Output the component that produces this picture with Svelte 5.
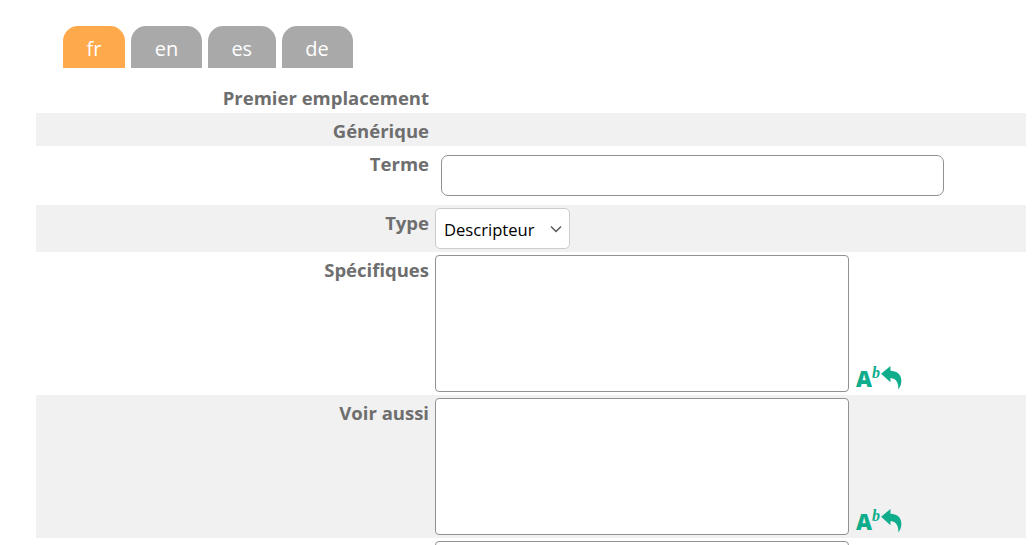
<script>
	const tabs = [
		{ code: 'fr', active: true },
		{ code: 'en' },
		{ code: 'es' },
		{ code: 'de' }
	];
</script>

{#snippet caseIcon()}
	<span class="case-icon">
		<span class="big">A</span><span class="small">b</span>
		<svg width="23" height="26" viewBox="0 0 22 25">
			<path d="M1 8.5 L10 1 V5.5 C16 5.5 20.5 9 20.5 15 C20.5 18.5 19.5 21.5 17.5 23.5 C18 19 16.5 13 10 12.5 V16.5 Z" fill="#10ad8c" />
		</svg>
	</span>
{/snippet}

<div class="page">
	<nav class="tabs">
		{#each tabs as tab}
			<span class="tab" class:active={tab.active}>{tab.code}</span>
		{/each}
	</nav>

	<div class="form">
		<div class="row first">
			<div class="label">Premier emplacement</div>
		</div>
		<div class="row grey generic">
			<div class="label">Générique</div>
		</div>
		<div class="row term">
			<div class="label">Terme</div>
			<input type="text" />
		</div>
		<div class="row grey type">
			<div class="label">Type</div>
			<select>
				<option>Descripteur</option>
			</select>
		</div>
		<div class="row area">
			<div class="label">Spécifiques</div>
			<textarea></textarea>
			{@render caseIcon()}
		</div>
		<div class="row grey area">
			<div class="label">Voir aussi</div>
			<textarea></textarea>
			{@render caseIcon()}
		</div>
		<div class="row area">
			<div class="label"></div>
			<textarea></textarea>
		</div>
	</div>
</div>

<style>
	:global(body) {
		margin: 0;
		overflow: hidden;
		background: #fff;
	}
	.page {
		height: 545px;
		overflow: hidden;
		padding: 26px 6px 0 36px;
		box-sizing: border-box;
		font-family: "Open Sans", "Noto Sans", sans-serif;
	}
	.tabs {
		display: flex;
		gap: 6px;
		padding-left: 27px;
		margin-bottom: 14px;
	}
	.tab {
		height: 42px;
		line-height: 46px;
		padding: 0 23.6px;
		border-radius: 15px 15px 0 0;
		background: #a9a9a9;
		color: #fff;
		font-size: 20px;
	}
	.tab:last-child {
		padding-right: 24.6px;
	}
	.tab.active {
		background: #ffa94d;
	}
	.row {
		display: flex;
		align-items: flex-start;
		gap: 6px;
	}
	.grey {
		background: #f1f1f1;
	}
	.label {
		width: 393px;
		flex: none;
		text-align: right;
		color: #6e6e6e;
		font-size: 18.5px;
		font-weight: 700;
		line-height: 25px;
	}
	.first {
		height: 31px;
		align-items: flex-end;
	}
	.first .label {
		padding-bottom: 3px;
	}
	.generic {
		height: 33px;
		align-items: center;
	}
	.generic .label {
		padding-top: 2px;
	}
	.term {
		height: 59px;
		padding-top: 5px;
		box-sizing: border-box;
		gap: 12px;
	}
	input {
		width: 503px;
		height: 41px;
		box-sizing: border-box;
		margin: 4px 0 0;
		background: #fff;
		border: 1px solid #919191;
		border-radius: 7px;
	}
	.type {
		height: 47px;
		padding-top: 3px;
		box-sizing: border-box;
	}
	.type .label {
		padding-top: 2px;
	}
	select {
		width: 135px;
		height: 41px;
		box-sizing: border-box;
		margin: 0;
		padding: 2px 8px 0;
		appearance: none;
		background: #fff url("data:image/svg+xml,%3Csvg xmlns='http://www.w3.org/2000/svg' width='12' height='8'%3E%3Cpath d='M1 1.5l5 5 5-5' fill='none' stroke='%23555' stroke-width='1.4'/%3E%3C/svg%3E") no-repeat right 7px center;
		border: 1px solid #ccc;
		border-radius: 5px;
		color: #000;
		font-family: inherit;
		font-size: 16.6px;
	}
	.area {
		height: 143px;
		padding-top: 3px;
		box-sizing: border-box;
	}
	.area .label {
		padding-top: 2px;
	}
	textarea {
		width: 414px;
		height: 137px;
		box-sizing: border-box;
		flex: none;
		margin: 0;
		resize: none;
		background: #fff;
		border: 1px solid #919191;
		border-radius: 4px;
	}
	.case-icon {
		display: flex;
		align-items: flex-end;
		align-self: flex-end;
		height: 30px;
		margin-left: 1px;
		margin-bottom: 3px;
		color: #10ad8c;
	}
	.big {
		font-size: 22px;
		font-weight: 800;
		line-height: 26px;
		margin-bottom: 1px;
	}
	.small {
		font-family: "Liberation Serif", serif;
		font-size: 16px;
		font-style: italic;
		font-weight: 700;
		line-height: 14px;
		align-self: flex-start;
		margin: 4px 0 0 0;
	}
	.case-icon svg {
		margin-bottom: 1px;
	}
</style>
